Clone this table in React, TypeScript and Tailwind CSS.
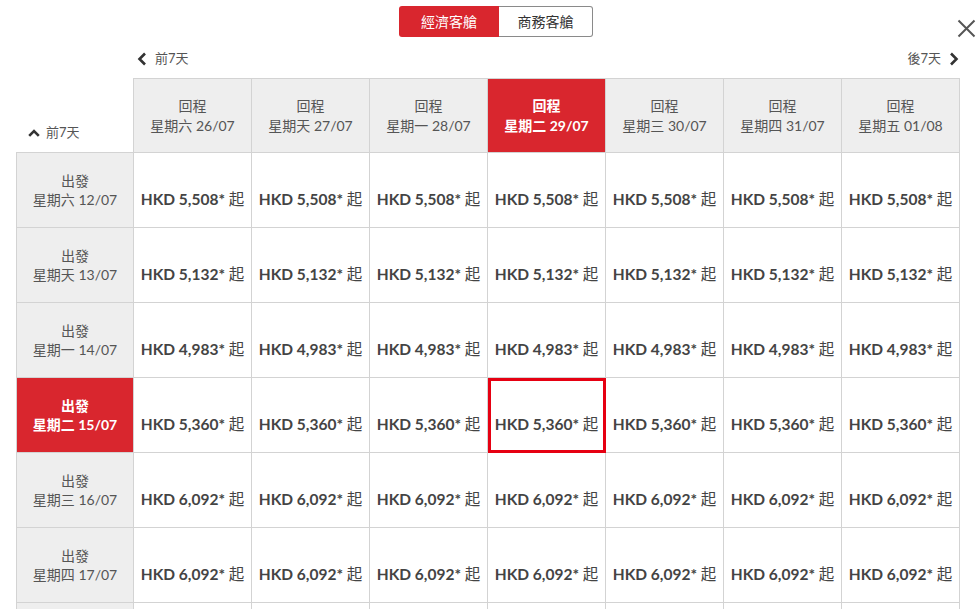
import React from "react";

const FONT = { fontFamily: "Lato, 'Noto Sans CJK TC', 'Noto Sans', sans-serif" };

const returns = [
  ["星期六", "26/07"],
  ["星期天", "27/07"],
  ["星期一", "28/07"],
  ["星期二", "29/07"],
  ["星期三", "30/07"],
  ["星期四", "31/07"],
  ["星期五", "01/08"],
];

const departs: [string, string, string][] = [
  ["星期六", "12/07", "5,508"],
  ["星期天", "13/07", "5,132"],
  ["星期一", "14/07", "4,983"],
  ["星期二", "15/07", "5,360"],
  ["星期三", "16/07", "6,092"],
  ["星期四", "17/07", "6,092"],
  ["星期五", "18/07", "6,092"],
];

const SEL_COL = 3;
const SEL_ROW = 3;

function ChevronLeft() {
  return (
    <svg width="10" height="14" viewBox="0 0 10 14" className="block">
      <path d="M8 1.5 L2.5 7 L8 12.5" fill="none" stroke="#333" strokeWidth="2.6" />
    </svg>
  );
}
function ChevronRight() {
  return (
    <svg width="10" height="14" viewBox="0 0 10 14" className="block">
      <path d="M2 1.5 L7.5 7 L2 12.5" fill="none" stroke="#333" strokeWidth="2.6" />
    </svg>
  );
}
function ChevronUp() {
  return (
    <svg width="12" height="9" viewBox="0 0 12 9" className="block">
      <path d="M1.2 7.8 L6 3 L10.8 7.8" fill="none" stroke="#333" strokeWidth="2.6" />
    </svg>
  );
}

export default function App() {
  return (
    <div className="relative w-[980px] h-[609px] overflow-hidden bg-white text-[#555]" style={FONT}>
      {/* close */}
      <div className="absolute left-[957px] top-[19px]">
        <svg width="19" height="19" viewBox="0 0 19 19" className="block">
          <path d="M1.5 1.5 L17.5 17.5 M17.5 1.5 L1.5 17.5" stroke="#555" strokeWidth="2" />
        </svg>
      </div>

      {/* cabin tabs */}
      <div className="pt-[6px] pl-[399px] flex">
        <div className="w-[100px] h-[31px] flex items-center justify-center bg-[#d9262e] text-white text-[14px] rounded-l-[3px]">
          經濟客艙
        </div>
        <div className="w-[94px] h-[31px] flex items-center justify-center bg-white text-[#333] text-[14px] border border-[#8a8a8a] border-l-0 rounded-r-[3px]">
          商務客艙
        </div>
      </div>

      {/* nav row */}
      <div className="mt-[14px] ml-[137px] mr-[21px] h-[16px] flex items-center justify-between text-[13px] text-[#555]">
        <div className="flex items-center gap-[8px]">
          <ChevronLeft />
          <span>前7天</span>
        </div>
        <div className="flex items-center gap-[8px]">
          <span>後7天</span>
          <ChevronRight />
        </div>
      </div>

      {/* grid */}
      <div className="mt-[11px] ml-[16px] grid grid-cols-[repeat(8,118px)]">
        <div className="h-[75px] border-r border-b border-[#d3d3d3] flex items-end pb-[10px] pl-[12px]">
          <div className="flex items-center gap-[6px] text-[13px] text-[#555]">
            <ChevronUp />
            <span>前7天</span>
          </div>
        </div>
        {returns.map(([d, dt], i) => {
          const sel = i === SEL_COL;
          return (
            <div
              key={i}
              className={
                "h-[75px] border-t border-r border-b border-[#d3d3d3] flex flex-col items-center justify-center text-[14px] leading-[20px] " +
                (sel ? "bg-[#d9262e] text-white font-bold" : "bg-[#eeeeee] text-[#555]")
              }
            >
              <span>回程</span>
              <span>
                {d} {dt}
              </span>
            </div>
          );
        })}
        {departs.map(([d, dt, price], r) => {
          const selRow = r === SEL_ROW;
          return (
            <React.Fragment key={r}>
              <div
                className={
                  "h-[75px] border-l border-r border-b border-[#d3d3d3] flex flex-col items-center justify-center text-[14px] leading-[19px] " +
                  (selRow ? "bg-[#d9262e] text-white font-bold" : "bg-[#eeeeee] text-[#555]")
                }
              >
                <span>出發</span>
                <span>
                  {d} {dt}
                </span>
              </div>
              {returns.map((_, c) => {
                const sel = selRow && c === SEL_COL;
                return (
                  <div
                    key={c}
                    className={
                      "h-[75px] border-r border-b border-[#d3d3d3] bg-white flex items-center justify-center pt-[20px] text-[15.5px] font-bold text-[#444] " +
                      (sel ? "outline-3 outline-[#e60012] -outline-offset-3" : "")
                    }
                  >
                    <span>
                      HKD {price}* <span className="font-normal">起</span>
                    </span>
                  </div>
                );
              })}
            </React.Fragment>
          );
        })}
      </div>
    </div>
  );
}
